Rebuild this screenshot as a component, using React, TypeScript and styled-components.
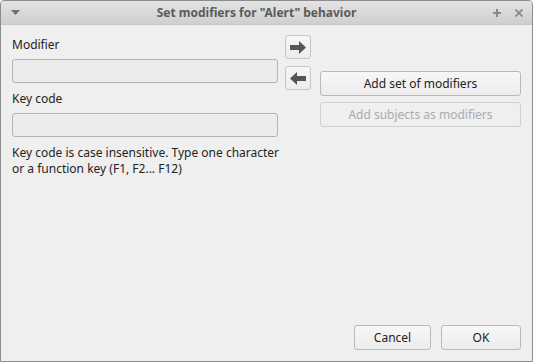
import React from "react";
import styled, { createGlobalStyle } from "styled-components";

const Global = createGlobalStyle`
  html, body { margin: 0; padding: 0; background: #ffffff; }
  body { font-family: "Noto Sans", "Open Sans", sans-serif; }
  * { box-sizing: border-box; }
`;

const Window = styled.div`
  width: 533px;
  height: 362px;
  border: 1px solid #8d8d8d;
  border-radius: 4px 4px 0 0;
  background: #efefef;
  display: flex;
  flex-direction: column;
  overflow: hidden;
`;

const TitleBar = styled.div`
  height: 24px;
  flex: none;
  display: grid;
  grid-template-columns: 40px 1fr 60px;
  align-items: center;
  background: linear-gradient(#e3e3e3, #cfcfcf);
  border-bottom: 1px solid #c6c6c6;
`;

const Title = styled.div`
  text-align: center;
  font-weight: bold;
  font-size: 12px;
  color: #5b5b5b;
`;

const TitleIcons = styled.div`
  display: flex;
  align-items: center;
  justify-content: flex-end;
  gap: 14px;
  padding-right: 9px;
`;

const MenuIcon = styled.div`
  padding-left: 10px;
  display: flex;
  align-items: center;
`;

const Body = styled.div`
  flex: 1;
  display: flex;
  flex-direction: column;
  padding: 10px 11px 11px 11px;
`;

const Main = styled.div`
  flex: 1;
  display: grid;
  grid-template-columns: 266px 26px 1fr;
  column-gap: 7px;
  align-items: start;
`;

const LeftCol = styled.div`
  display: flex;
  flex-direction: column;
`;

const Label = styled.div<{ $top?: number }>`
  font-size: 12px;
  color: #232323;
  line-height: 17px;
  margin-top: ${(p) => p.$top ?? 0}px;
  margin-bottom: 6px;
`;

const Input = styled.div`
  height: 24px;
  border: 1px solid #b3b3b3;
  border-radius: 3px;
  background: #ececec;
`;

const Help = styled.div`
  font-size: 12px;
  color: #232323;
  line-height: 16px;
  margin-top: 8px;
  white-space: nowrap;
`;

const ArrowCol = styled.div`
  display: flex;
  flex-direction: column;
  gap: 7px;
`;

const RightCol = styled.div`
  display: flex;
  flex-direction: column;
  gap: 6px;
  padding-top: 36px;
  margin-left: 2px;
`;

const ArrowButton = styled.div`
  width: 26px;
  height: 24px;
  border: 1px solid #c6c6c6;
  border-radius: 3px;
  background: linear-gradient(#f7f7f7, #ececec);
  display: flex;
  align-items: center;
  justify-content: center;
`;

const Button = styled.div<{ $disabled?: boolean; $width?: number }>`
  height: 25px;
  width: ${(p) => (p.$width ? `${p.$width}px` : "auto")};
  border: 1px solid ${(p) => (p.$disabled ? "#cfcfcf" : "#b9b9b9")};
  border-radius: 3px;
  background: ${(p) => (p.$disabled ? "#efefef" : "linear-gradient(#f7f7f7, #ececec)")};
  display: flex;
  align-items: center;
  justify-content: center;
  font-size: 12px;
  color: ${(p) => (p.$disabled ? "#ababab" : "#232323")};
`;

const Footer = styled.div`
  display: flex;
  justify-content: flex-end;
  gap: 10px;
`;

const Arrow = ({ dir }: { dir: "right" | "left" }) => (
  <svg width="16" height="13" viewBox="0 0 16 13">
    <path
      d={dir === "right" ? "M0 4h9V0l7 6.5-7 6.5V9H0z" : "M16 4H7V0L0 6.5 7 13V9h9z"}
      fill="#555555"
    />
  </svg>
);

export default function App() {
  return (
    <>
      <Global />
      <Window>
        <TitleBar>
          <MenuIcon>
            <svg width="9" height="6" viewBox="0 0 9 6">
              <path d="M0 0h9L4.5 5z" fill="#707070" />
            </svg>
          </MenuIcon>
          <Title>Set modifiers for "Alert" behavior</Title>
          <TitleIcons>
            <svg width="8" height="8" viewBox="0 0 8 8">
              <path d="M3 0h2v3h3v2H5v3H3V5H0V3h3z" fill="#8a8a8a" />
            </svg>
            <svg width="8" height="8" viewBox="0 0 8 8">
              <path d="M0.5 0.5l7 7M7.5 0.5l-7 7" stroke="#8a8a8a" strokeWidth="1.8" />
            </svg>
          </TitleIcons>
        </TitleBar>
        <Body>
          <Main>
            <LeftCol>
              <Label $top={1}>Modifier</Label>
              <Input />
              <Label $top={7}>Key code</Label>
              <Input />
              <Help>
                Key code is case insensitive. Type one character
                <br />
                or a function key (F1, F2... F12)
              </Help>
            </LeftCol>
            <ArrowCol>
              <ArrowButton>
                <Arrow dir="right" />
              </ArrowButton>
              <ArrowButton>
                <Arrow dir="left" />
              </ArrowButton>
            </ArrowCol>
            <RightCol>
              <Button>Add set of modifiers</Button>
              <Button $disabled>Add subjects as modifiers</Button>
            </RightCol>
          </Main>
          <Footer>
            <Button $width={77}>Cancel</Button>
            <Button $width={80}>OK</Button>
          </Footer>
        </Body>
      </Window>
    </>
  );
}
